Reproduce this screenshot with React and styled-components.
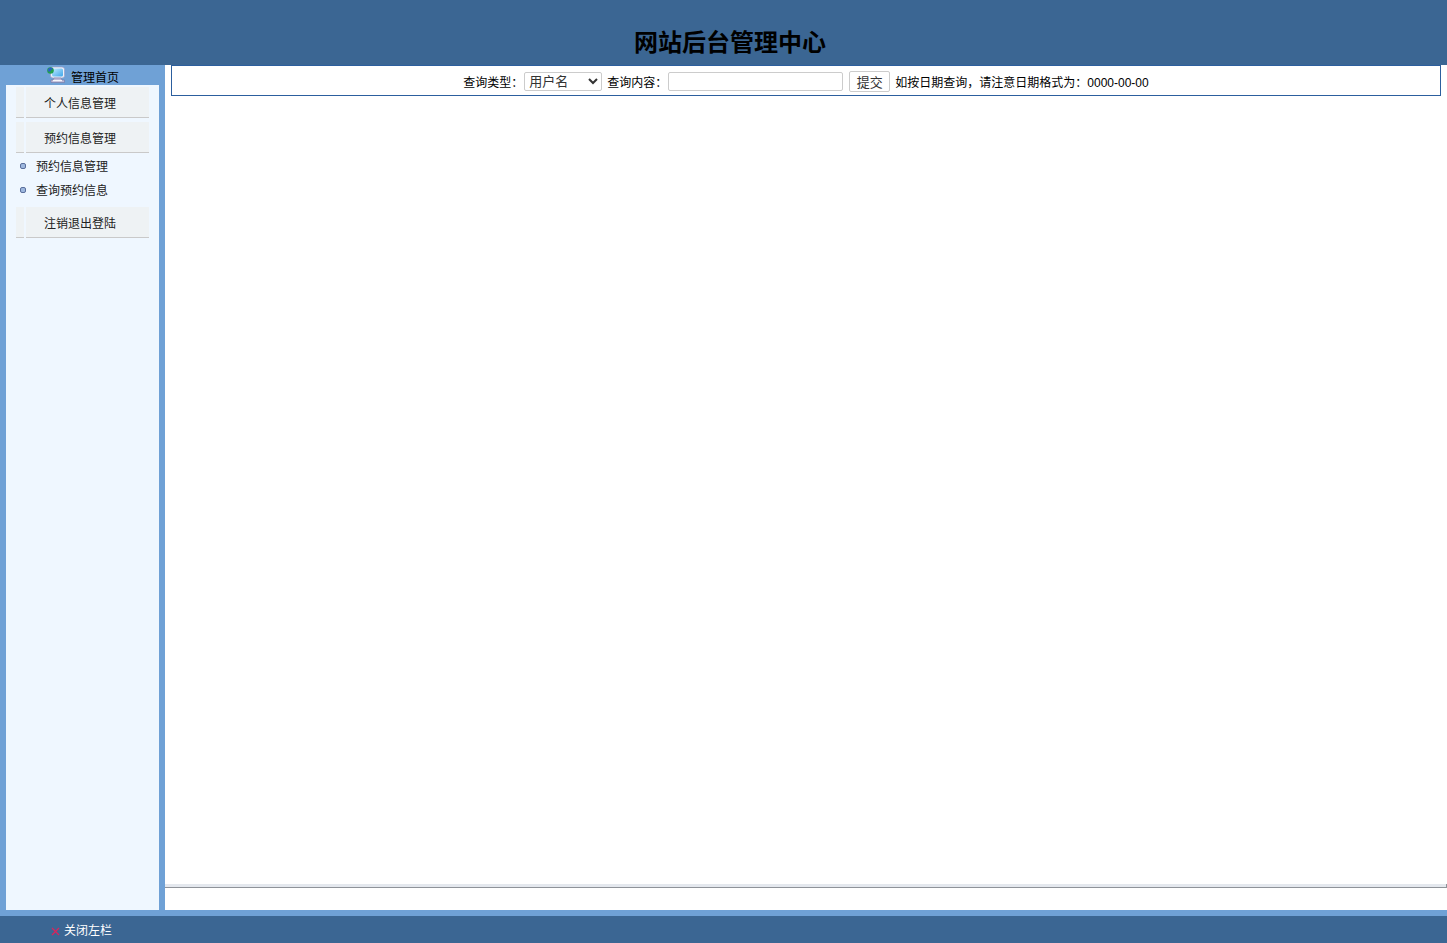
import React from "react";
import styled, { createGlobalStyle } from "styled-components";

const GlobalStyle = createGlobalStyle`
  html, body {
    margin: 0;
    padding: 0;
    height: 100%;
    overflow: hidden;
  }
  body {
    font-family: "Liberation Sans", "Noto Sans CJK SC", sans-serif;
    font-size: 12px;
    color: #000;
  }
`;

export default function App() {
  return (
    <>
      <GlobalStyle />
      <Page>
        <Header>
          <Title>网站后台管理中心</Title>
        </Header>
        <Middle>
          <Sidebar>
            <HomeLink>
              <ComputerIcon />
              <span>管理首页</span>
            </HomeLink>
            <SideInner>
              <MenuTitle>个人信息管理</MenuTitle>
              <MenuTitle>预约信息管理</MenuTitle>
              <SubList>
                <SubItem>预约信息管理</SubItem>
                <SubItem>查询预约信息</SubItem>
              </SubList>
              <MenuTitle>注销退出登陆</MenuTitle>
            </SideInner>
          </Sidebar>
          <Main>
            <SearchBar>
              <Label>查询类型：</Label>
              <TypeSelect defaultValue="用户名">
                <option>用户名</option>
                <option>预约日期</option>
              </TypeSelect>
              <Label>查询内容：</Label>
              <QueryInput type="text" />
              <SubmitButton type="button">提交</SubmitButton>
              <Label>如按日期查询，请注意日期格式为：0000-00-00</Label>
            </SearchBar>
            <Content />
            <Rule />
            <BottomGap />
          </Main>
        </Middle>
        <Footer>
          <CloseLink>
            <CloseIcon />
            <span>关闭左栏</span>
          </CloseLink>
        </Footer>
      </Page>
    </>
  );
}

function ComputerIcon() {
  return (
    <IconSvg width="18" height="17" viewBox="0 0 18 17">
      <defs>
        <linearGradient id="screen" x1="0" y1="0" x2="1" y2="1">
          <stop offset="0" stopColor="#bfeaff" />
          <stop offset="1" stopColor="#3fa6ea" />
        </linearGradient>
      </defs>
      <rect x="3.500" y="1" width="14" height="11" rx="2.500" fill="#eef2fa" stroke="#9a9cc4" strokeWidth="0.700" />
      <rect x="5" y="2.500" width="11" height="8" rx="1.500" fill="url(#screen)" />
      <path d="M7 12h7l1 2h2.500v2.500H4V14h2z" fill="#bdbad8" stroke="#6f6c98" strokeWidth="0.500" />
      <rect x="6" y="14" width="9" height="1.200" fill="#f6f6fb" />
      <circle cx="3.500" cy="4.500" r="3.300" fill="#22a04f" />
      <path d="M1 3c1.500-1.600 3-1.700 5-.8-.8 1.200-1.600 1-2 2.100S2 6.400 1 5z" fill="#2a62c4" />
    </IconSvg>
  );
}

function CloseIcon() {
  return (
    <svg width="9" height="9" viewBox="0 0 9 9">
      <path d="M1 1l7 7M8 1l-7 7" stroke="#d8245c" strokeWidth="1.300" />
    </svg>
  );
}

const Page = styled.div`
  display: flex;
  flex-direction: column;
  width: 1447px;
  height: 943px;
  background: #6fa1d6;
`;

const Header = styled.header`
  display: flex;
  justify-content: center;
  height: 65px;
  padding-left: 13px;
  box-sizing: border-box;
  background: #3b6693;
`;

const Title = styled.h1`
  margin: 0;
  padding-top: 27px;
  font-size: 24px;
  line-height: 32px;
  font-weight: 700;
  color: #000;
`;

const Middle = styled.div`
  display: flex;
  height: 845px;
`;

const Sidebar = styled.aside`
  display: flex;
  flex-direction: column;
  width: 165px;
  flex: none;
`;

const HomeLink = styled.div`
  display: flex;
  align-items: flex-start;
  height: 20px;
  padding-left: 47px;
  box-sizing: border-box;
  span {
    margin: 6px 0 0 6px;
    line-height: 15px;
  }
`;

const IconSvg = styled.svg`
  flex: none;
  margin-top: 1px;
`;

const SideInner = styled.div`
  flex: 1;
  margin: 0 6px;
  padding-top: 2px;
  background: #eff7ff;
`;

const MenuTitle = styled.div`
  height: 31px;
  margin: 0 10px 4px;
  box-sizing: border-box;
  padding: 9px 5px 0 0;
  text-align: center;
  line-height: 16px;
  color: #222;
  background:
    linear-gradient(#eff7ff, #eff7ff) 8px 0 / 2px 100% no-repeat,
    linear-gradient(#c9c9c9, #c9c9c9) 0 100% / 100% 1px no-repeat,
    #eef2f4;
`;

const SubList = styled.ul`
  list-style: none;
  margin: 0 0 2px;
  padding: 0;
`;

const SubItem = styled.li`
  position: relative;
  height: 24px;
  padding-left: 30px;
  line-height: 20px;
  color: #222;
  &::before {
    content: "";
    position: absolute;
    left: 14px;
    top: 6px;
    width: 4px;
    height: 4px;
    border: 1px solid #5a6f9c;
    border-radius: 2px;
    background: #9db7de;
  }
`;

const Main = styled.main`
  display: flex;
  flex-direction: column;
  flex: 1;
  background: #fff;
`;

const SearchBar = styled.form`
  display: flex;
  align-items: center;
  justify-content: center;
  gap: 1px;
  height: 31px;
  margin: 0 6px;
  box-sizing: border-box;
  padding-top: 1px;
  background: #fff;
  border: 1px solid #2c5f9e;
`;

const Label = styled.span`
  white-space: nowrap;
  color: #000;
`;

const TypeSelect = styled.select`
  width: 78px;
  height: 19px;
  margin-right: 4px;
  padding: 0 0 2px 0;
  font: 13px "Liberation Sans", "Noto Sans CJK SC", sans-serif;
  color: #333;
  background: #fff;
  border: 1px solid #ccc;
  border-radius: 2px;
`;

const QueryInput = styled.input`
  width: 175px;
  height: 19px;
  margin-right: 5px;
  padding: 0;
  box-sizing: border-box;
  background: #fff;
  border: 1px solid #ccc;
  border-radius: 2px;
`;

const SubmitButton = styled.button`
  width: 41px;
  height: 21px;
  margin-right: 4px;
  padding: 0 0 2px;
  font: 13px "Liberation Sans", "Noto Sans CJK SC", sans-serif;
  color: #333;
  background: #fff;
  border: 1px solid #ccc;
  border-radius: 2px;
`;

const Content = styled.div`
  flex: 1;
`;

const Rule = styled.div`
  height: 3px;
  background: #e4e8ee;
  border-bottom: 1px solid #8f9399;
  border-right: 1px solid #8f9399;
`;

const BottomGap = styled.div`
  height: 22px;
`;

const Footer = styled.footer`
  display: flex;
  align-items: center;
  height: 27px;
  margin-top: 6px;
  padding-left: 51px;
  box-sizing: border-box;
  background: #3b6693;
`;

const CloseLink = styled.div`
  display: flex;
  align-items: center;
  gap: 4px;
  color: #fff;
  svg {
    margin-top: 3px;
  }
`;
